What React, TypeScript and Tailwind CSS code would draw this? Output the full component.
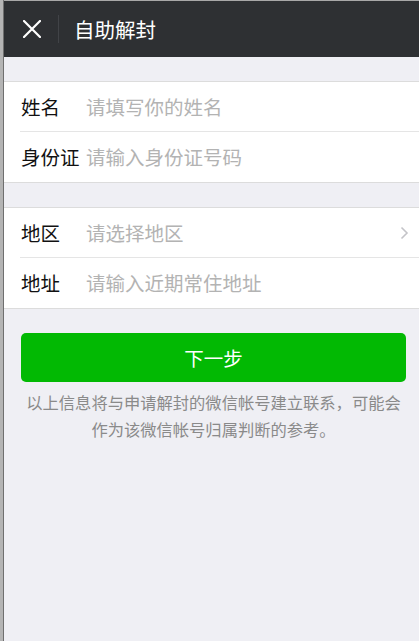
import React from "react";

const rowsA = [
  { label: "姓名", placeholder: "请填写你的姓名" },
  { label: "身份证", placeholder: "请输入身份证号码" },
];

const rowsB = [
  { label: "地区", placeholder: "请选择地区", arrow: true },
  { label: "地址", placeholder: "请输入近期常住地址" },
];

function Row({ label, placeholder, arrow, last }: { label: string; placeholder: string; arrow?: boolean; last?: boolean }) {
  return (
    <div className="pl-[16px] bg-white">
      <div className={`h-[50px] flex items-center pr-[10px] ${last ? "" : "border-b border-[#e5e5e5]"}`}>
        <span className="w-[66px] pl-[1px] text-[19.5px] leading-none text-[#111] whitespace-nowrap">{label}</span>
        <span className="flex-1 text-[19.5px] leading-none text-[#b3b3b3]">{placeholder}</span>
        {arrow && (
          <svg width="9" height="14" viewBox="0 0 9 14" fill="none">
            <path d="M1.5 1.5 L7 7 L1.5 12.5" stroke="#c4c4c8" strokeWidth="1.6" />
          </svg>
        )}
      </div>
    </div>
  );
}

export default function App() {
  return (
    <div className="flex h-[641px] w-full font-['Noto_Sans_CJK_SC',sans-serif] bg-[#efeff4]">
      {/* window edge */}
      <div className="w-[3px] bg-[#b4b4b4]" />
      <div className="w-[1px] bg-[#6f6f6f]" />

      <main className="flex-1 flex flex-col border-t border-[#a8a8a8] bg-[#efeff4]">
        <header className="h-[56px] flex items-center bg-[#2e3033]">
          <svg width="18" height="18" viewBox="0 0 18 18" className="ml-[19px]">
            <path d="M1 1 L17 17 M17 1 L1 17" stroke="#fff" strokeWidth="2.2" strokeLinecap="round" />
          </svg>
          <div className="ml-[17px] w-[1px] h-[28px] bg-[#414347]" />
          <h1 className="ml-[15px] text-[20.5px] leading-none text-white font-normal">自助解封</h1>
        </header>

        <section className="mt-[24px] border-y border-[#dcdcdc]">
          {rowsA.map((r, i) => (
            <Row key={r.label} {...r} last={i === rowsA.length - 1} />
          ))}
        </section>

        <section className="mt-[24px] border-y border-[#dcdcdc]">
          {rowsB.map((r, i) => (
            <Row key={r.label} {...r} last={i === rowsB.length - 1} />
          ))}
        </section>

        <div className="pl-[17px] pr-[13px] mt-[24px]">
          <button className="w-full h-[49px] rounded-[5px] bg-[#02b903] text-white text-[19.5px] leading-none">
            下一步
          </button>
        </div>

        <p className="mt-[7px] pl-[17px] pr-[13px] text-center text-[16.3px] leading-[27px] text-[#8a8a8a]">
          以上信息将与申请解封的微信帐号建立联系，可能会作为该微信帐号归属判断的参考。
        </p>
      </main>
    </div>
  );
}
